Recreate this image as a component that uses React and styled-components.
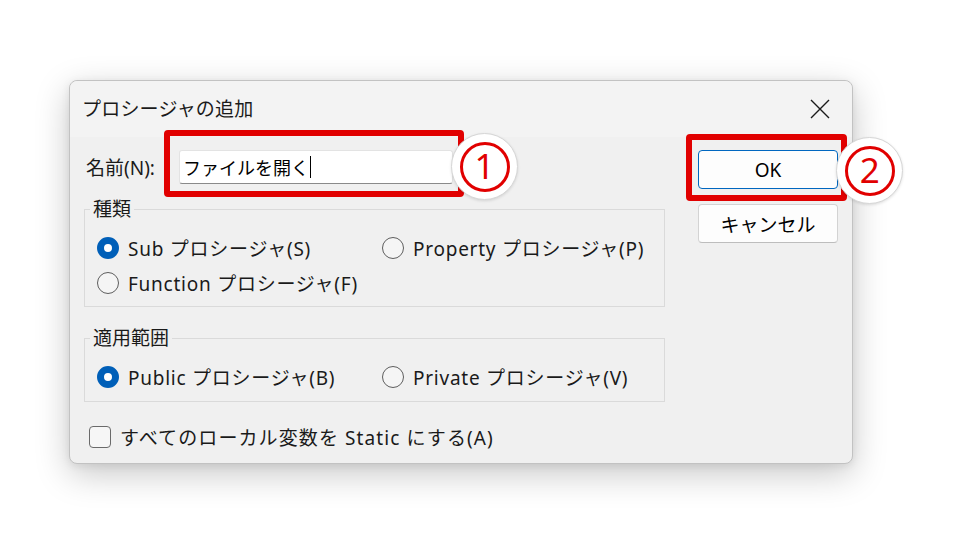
import React from "react";
import styled, { createGlobalStyle } from "styled-components";

const GlobalStyle = createGlobalStyle`
  html, body {
    margin: 0;
    padding: 0;
    background: #ffffff;
  }
  body {
    font-family: "Noto Sans", "Noto Sans CJK JP", sans-serif;
    color: #1a1a1a;
  }
`;

const Page = styled.div`
  padding: 80px 0 0 69px;
  width: 954px;
  height: 535px;
  box-sizing: border-box;
`;

const Dialog = styled.div`
  width: 784px;
  box-sizing: border-box;
  border: 1px solid #c2c2c2;
  border-radius: 8px;
  background: #f0f0f0;
  box-shadow: 0 10px 34px rgba(0, 0, 0, 0.22), 0 2px 8px rgba(0, 0, 0, 0.08);
`;

const TitleBar = styled.div`
  height: 56px;
  display: flex;
  align-items: center;
  justify-content: space-between;
  padding-left: 12px;
  background: #f3f3f3;
  border-radius: 8px 8px 0 0;
`;

const Title = styled.div`
  font-size: 19px;
  line-height: 20px;
  letter-spacing: 0.2px;
`;

const CloseButton = styled.div`
  width: 40px;
  height: 40px;
  margin-right: 12px;
  display: flex;
  align-items: center;
  justify-content: center;
`;

const Body = styled.div`
  display: flex;
  gap: 33px;
  padding: 13px 14px 9px 14px;
`;

const LeftColumn = styled.div`
  width: 582px;
  display: flex;
  flex-direction: column;
`;

const RightColumn = styled.div`
  width: 140px;
  display: flex;
  flex-direction: column;
  gap: 15px;
`;

const NameRow = styled.div`
  display: flex;
  align-items: center;
  height: 34px;
`;

const Label = styled.div`
  font-size: 19px;
  margin-left: 2px;
  width: 93px;
  flex: none;
  white-space: nowrap;
`;

const Anchor = styled.div`
  position: relative;
`;

const TextBox = styled.div`
  width: 274px;
  height: 34px;
  box-sizing: border-box;
  background: #ffffff;
  border: 1px solid #e3e3e3;
  border-bottom: 1px solid #8a8a8a;
  border-radius: 3px;
  padding-left: 3px;
  display: flex;
  align-items: center;
  font-family: "Noto Sans CJK JP", sans-serif;
  font-size: 18px;
  color: #000;
`;

const Caret = styled.span`
  display: inline-block;
  width: 1px;
  height: 22px;
  background: #000;
  margin-left: 1px;
`;

const Highlight = styled.div`
  position: absolute;
  top: ${(p) => p.$top}px;
  left: ${(p) => p.$left}px;
  right: ${(p) => p.$right}px;
  bottom: ${(p) => p.$bottom}px;
  border: 6px solid #e10000;
  border-radius: 4px;
  pointer-events: none;
`;

const Badge = styled.div`
  position: absolute;
  top: ${(p) => p.$top}px;
  left: ${(p) => p.$left}px;
  width: 67px;
  height: 67px;
  box-sizing: border-box;
  border-radius: 50%;
  background: #ffffff;
  border: 1px solid #d6d6d6;
  box-shadow: 0 1px 3px rgba(0, 0, 0, 0.12);
  display: flex;
  align-items: center;
  justify-content: center;
  z-index: 2;
`;

const BadgeRing = styled.div`
  width: 50px;
  height: 50px;
  box-sizing: border-box;
  border-radius: 50%;
  border: 3.5px solid #e10000;
  display: flex;
  align-items: center;
  justify-content: center;
  color: #e10000;
  font-family: "Noto Sans", "Noto Sans CJK JP", sans-serif;
  font-size: 35px;
  line-height: 1;
  padding-bottom: 2px;
`;

const Group = styled.fieldset`
  margin: ${(p) => p.$gap}px 0 0 0;
  padding: 0;
  border: 1px solid #dadada;
  min-width: 0;
`;

const Legend = styled.legend`
  font-size: 19px;
  line-height: 20px;
  padding: 0 3px;
  margin-left: 5px;
`;

const OptionGrid = styled.div`
  display: grid;
  grid-template-columns: 285px auto;
  grid-auto-rows: 35px;
  padding: 11px 0 ${(p) => p.$bottom}px 12px;
`;

const Option = styled.label`
  display: flex;
  align-items: center;
  gap: 9px;
  font-size: 19px;
  letter-spacing: 0.75px;
  white-space: nowrap;
`;

const Radio = styled.span`
  width: 22px;
  height: 22px;
  box-sizing: border-box;
  border-radius: 50%;
  flex: none;
  background: ${(p) => (p.$checked ? "#ffffff" : "#f5f5f5")};
  border: ${(p) => (p.$checked ? "7px solid #005fb8" : "1px solid #5e5e5e")};
`;

const CheckRow = styled.label`
  display: flex;
  align-items: center;
  gap: 9px;
  height: 35px;
  margin-top: 17px;
  padding-left: 5px;
  font-size: 19px;
  letter-spacing: 1.1px;
  white-space: nowrap;
`;

const CheckBox = styled.span`
  width: 22px;
  height: 22px;
  box-sizing: border-box;
  border-radius: 4px;
  border: 1px solid #6a6a6a;
  background: #f6f6f6;
  flex: none;
`;

const Button = styled.div`
  height: 39px;
  box-sizing: border-box;
  border-radius: 4px;
  background: #fdfdfd;
  border: 1px solid ${(p) => (p.$primary ? "#0067c0" : "#d3d3d3")};
  border-bottom-color: ${(p) => (p.$primary ? "#0067c0" : "#bdbdbd")};
  display: flex;
  align-items: center;
  justify-content: center;
  font-size: 19px;
  color: #000;
`;

const CloseIcon = () => (
  <svg width="20" height="20" viewBox="0 0 20 20">
    <path d="M1 1 L19 19 M19 1 L1 19" stroke="#1a1a1a" strokeWidth="1.4" />
  </svg>
);

const kinds = [
  { label: "Sub プロシージャ(S)", checked: true },
  { label: "Property プロシージャ(P)" },
  { label: "Function プロシージャ(F)" },
];

const scopes = [
  { label: "Public プロシージャ(B)", checked: true },
  { label: "Private プロシージャ(V)" },
];

export default function App() {
  return (
    <>
      <GlobalStyle />
      <Page>
        <Dialog>
          <TitleBar>
            <Title>プロシージャの追加</Title>
            <CloseButton>
              <CloseIcon />
            </CloseButton>
          </TitleBar>
          <Body>
            <LeftColumn>
              <NameRow>
                <Label>名前(N):</Label>
                <Anchor>
                  <TextBox>
                    ファイルを開く
                    <Caret />
                  </TextBox>
                  <Highlight $top={-20} $left={-15} $right={-11} $bottom={-13} />
                  <Badge $top={-17} $left={272}>
                    <BadgeRing>1</BadgeRing>
                  </Badge>
                </Anchor>
              </NameRow>

              <Group $gap={15}>
                <Legend>種類</Legend>
                <OptionGrid $bottom={6}>
                  {kinds.map((k) => (
                    <Option key={k.label}>
                      <Radio $checked={k.checked} />
                      {k.label}
                    </Option>
                  ))}
                </OptionGrid>
              </Group>

              <Group $gap={21}>
                <Legend>適用範囲</Legend>
                <OptionGrid $bottom={7}>
                  {scopes.map((s) => (
                    <Option key={s.label}>
                      <Radio $checked={s.checked} />
                      {s.label}
                    </Option>
                  ))}
                </OptionGrid>
              </Group>

              <CheckRow>
                <CheckBox />
                すべてのローカル変数を Static にする(A)
              </CheckRow>
            </LeftColumn>

            <RightColumn>
              <Anchor>
                <Button $primary>OK</Button>
                <Highlight $top={-16} $left={-12} $right={-9} $bottom={-12} />
                <Badge $top={-13} $left={138}>
                  <BadgeRing>2</BadgeRing>
                </Badge>
              </Anchor>
              <Button>キャンセル</Button>
            </RightColumn>
          </Body>
        </Dialog>
      </Page>
    </>
  );
}
